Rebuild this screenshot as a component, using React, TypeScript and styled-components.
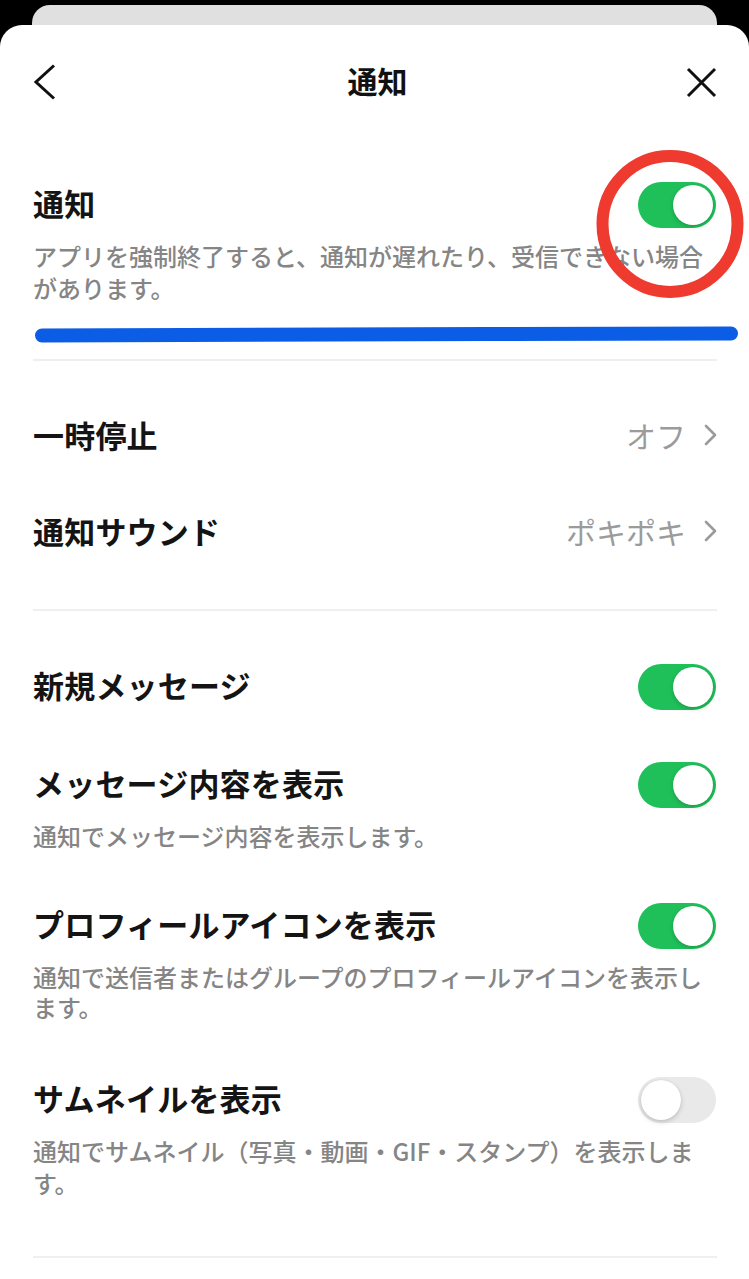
import { ReactElement } from "react";
import styled, { createGlobalStyle } from "styled-components";

const GlobalStyle = createGlobalStyle`
    html, body {
        margin: 0;
        padding: 0;
        background: #000;
    }
    body {
        font-family: "Noto Sans CJK JP", "Noto Sans", sans-serif;
        -webkit-font-smoothing: antialiased;
    }
`;

const Screen = styled.div`
    padding-top: 5px;
    min-height: 100vh;
    box-sizing: border-box;
`;

const BackCard = styled.div`
    height: 20px;
    margin: 0 32px;
    background: #e0e0e0;
    border-radius: 18px 18px 0 0;
`;

const Sheet = styled.div`
    position: relative;
    background: #fff;
    border-radius: 22px 22px 0 0;
    min-height: calc(100vh - 25px);
    overflow: hidden;
`;

const Header = styled.div`
    height: 114px;
    padding: 0 32px 0 34px;
    display: flex;
    align-items: center;
    justify-content: space-between;
`;

const HeaderTitle = styled.div`
    font-size: 30px;
    font-weight: 700;
    color: #111;
    margin-left: 4px;
    padding-bottom: 5px;
`;

const IconButton = styled.div<{ $align: string }>`
    width: 36px;
    height: 40px;
    display: flex;
    align-items: center;
    justify-content: ${(p) => p.$align};
`;

const Content = styled.div`
    padding: 0 32px 0 33px;
`;

const Section = styled.div<{ $top: number; $bottom: number }>`
    padding-top: ${(p) => p.$top}px;
    padding-bottom: ${(p) => p.$bottom}px;
    border-bottom: 2px solid #efefef;
    display: flex;
    flex-direction: column;
`;

const Item = styled.div<{ $mt?: number }>`
    display: flex;
    flex-direction: column;
    margin-top: ${(p) => p.$mt ?? 0}px;
`;

const Row = styled.div<{ $height: number }>`
    height: ${(p) => p.$height}px;
    display: flex;
    align-items: center;
    justify-content: space-between;
`;

const Label = styled.div`
    font-size: 31px;
    font-weight: 700;
    color: #141414;
    letter-spacing: 0.2px;
    padding-bottom: 6px;
`;

const Desc = styled.div<{ $lh: number; $mt: number }>`
    margin-top: ${(p) => p.$mt}px;
    font-size: 24px;
    font-weight: 500;
    line-height: ${(p) => p.$lh}px;
    color: #858585;
    padding-right: 6px;
`;

const Value = styled.div`
    display: flex;
    align-items: center;
    gap: 18px;
    font-size: 30px;
    color: #9b9b9b;
    padding-bottom: 4px;
`;

const Switch = styled.div<{ $on: boolean }>`
    width: 78px;
    height: 46px;
    border-radius: 23px;
    margin-right: 1px;
    background: ${(p) => (p.$on ? "#1fc05a" : "#e9e9ea")};
    display: flex;
    align-items: center;
    justify-content: ${(p) => (p.$on ? "flex-end" : "flex-start")};
    padding: 0 3px;
    box-sizing: border-box;
    flex-shrink: 0;
`;

const Knob = styled.div`
    width: 40px;
    height: 40px;
    border-radius: 50%;
    background: #fff;
    box-shadow: 0 2px 5px rgba(0, 0, 0, 0.18), 0 0 1px rgba(0, 0, 0, 0.12);
`;

const BlueMark = styled.svg`
    position: absolute;
    left: 0;
    top: 295px;
    pointer-events: none;
`;

const RedCircle = styled.svg`
    position: absolute;
    left: 594px;
    top: 123px;
    pointer-events: none;
`;

function Toggle({ on }: { on: boolean }): ReactElement {
    return (
        <Switch $on={on}>
            <Knob />
        </Switch>
    );
}

function Chevron(): ReactElement {
    return (
        <svg width="13" height="22" viewBox="0 0 13 22">
            <path d="M2 2 L11 11 L2 20" fill="none" stroke="#9b9b9b" strokeWidth="2.6" strokeLinecap="round" strokeLinejoin="round" />
        </svg>
    );
}

export default function App(): ReactElement {
    return (
        <>
            <GlobalStyle />
            <Screen>
                <BackCard />
                <Sheet>
                    <Header>
                        <IconButton $align="flex-start">
                            <svg width="22" height="36" viewBox="0 0 22 36">
                                <path d="M20 1.5 L2 18 L20 34.5" fill="none" stroke="#111" strokeWidth="3" strokeLinejoin="miter" />
                            </svg>
                        </IconButton>
                        <HeaderTitle>通知</HeaderTitle>
                        <IconButton $align="flex-end">
                            <svg width="31" height="31" viewBox="0 0 31 31">
                                <path d="M2 2 L29 29 M29 2 L2 29" fill="none" stroke="#111" strokeWidth="3" />
                            </svg>
                        </IconButton>
                    </Header>

                    <Content>
                        <Section $top={43} $bottom={55}>
                            <Item>
                                <Row $height={46}>
                                    <Label>通知</Label>
                                    <Toggle on />
                                </Row>
                                <Desc $lh={32} $mt={12}>
                                    アプリを強制終了すると、通知が遅れたり、受信できない場合があります。
                                </Desc>
                            </Item>
                        </Section>

                        <Section $top={28} $bottom={28}>
                            <Row $height={96}>
                                <Label>一時停止</Label>
                                <Value>
                                    オフ
                                    <Chevron />
                                </Value>
                            </Row>
                            <Row $height={96}>
                                <Label>通知サウンド</Label>
                                <Value>
                                    ポキポキ
                                    <Chevron />
                                </Value>
                            </Row>
                        </Section>

                        <Section $top={53} $bottom={57}>
                            <Item>
                                <Row $height={46}>
                                    <Label>新規メッセージ</Label>
                                    <Toggle on />
                                </Row>
                            </Item>
                            <Item $mt={52}>
                                <Row $height={46}>
                                    <Label>メッセージ内容を表示</Label>
                                    <Toggle on />
                                </Row>
                                <Desc $lh={30} $mt={13}>
                                    通知でメッセージ内容を表示します。
                                </Desc>
                            </Item>
                            <Item $mt={52}>
                                <Row $height={46}>
                                    <Label>プロフィールアイコンを表示</Label>
                                    <Toggle on />
                                </Row>
                                <Desc $lh={30} $mt={13}>
                                    通知で送信者またはグループのプロフィールアイコンを表示します。
                                </Desc>
                            </Item>
                            <Item $mt={55}>
                                <Row $height={46}>
                                    <Label>サムネイルを表示</Label>
                                    <Toggle on={false} />
                                </Row>
                                <Desc $lh={32} $mt={12}>
                                    通知でサムネイル（写真・動画・GIF・スタンプ）を表示します。
                                </Desc>
                            </Item>
                        </Section>
                    </Content>

                    <BlueMark width="749" height="40" viewBox="0 0 749 40">
                        <path d="M42 15.5 C 200 14.5, 500 14, 731 13.5" fill="none" stroke="#0c5de6" strokeWidth="14" strokeLinecap="round" />
                    </BlueMark>
                    <RedCircle width="152" height="152" viewBox="0 0 152 152">
                        <ellipse cx="76" cy="76" rx="67.5" ry="68" fill="none" stroke="#ee3a2f" strokeWidth="12" />
                    </RedCircle>
                </Sheet>
            </Screen>
        </>
    );
}
